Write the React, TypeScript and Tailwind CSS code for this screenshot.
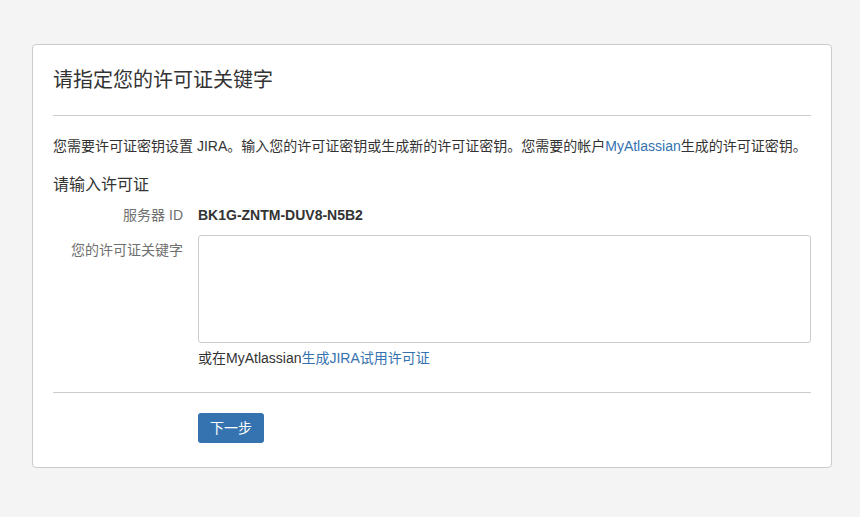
import React from "react";

export default function App() {
  const font = { fontFamily: '"Liberation Sans", Arial, "Noto Sans CJK SC", sans-serif' };
  return (
    <div className="min-h-screen w-full bg-[#f4f4f4] pt-[44px]" style={font}>
      <div className="ml-[32px] w-[800px] rounded-[4px] border border-[#cccccc] bg-white px-[20px] pb-[24px] pt-[20px] text-[14px] text-[#333333]">
        <h1 className="text-[20px] leading-[30px] text-[#333333]">请指定您的许可证关键字</h1>
        <div className="mt-[20px] h-px bg-[#cccccc]" />
        <p className="mt-[20px] leading-[20px]">
          您需要许可证密钥设置 JIRA。输入您的许可证密钥或生成新的许可证密钥。您需要的帐户
          <a className="text-[#3572b0]">MyAtlassian</a>生成的许可证密钥。
        </p>
        <h2 className="mt-[18px] text-[16px] leading-[22px]">请输入许可证</h2>
        <div className="mt-[9px] grid grid-cols-[130px_1fr] gap-x-[15px]">
          <div className="text-right leading-[20px] text-[#707070]">服务器 ID</div>
          <div className="font-bold leading-[20px]">BK1G-ZNTM-DUV8-N5B2</div>
          <div className="mt-[10px] pt-[5px] text-right leading-[20px] text-[#707070]">您的许可证关键字</div>
          <div className="mt-[10px]">
            <textarea className="block h-[108px] w-full resize-none rounded-[3px] border border-[#cccccc] px-2 py-1 outline-none" />
            <div className="mt-[5px] leading-[20px]">
              或在MyAtlassian<a className="text-[#3572b0]">生成JIRA试用许可证</a>
            </div>
          </div>
        </div>
        <div className="mt-[24px] h-px bg-[#cccccc]" />
        <div className="mt-[20px] grid grid-cols-[130px_1fr] gap-x-[15px]">
          <div />
          <div>
            <button className="h-[30px] rounded-[3px] bg-[#3572b0] px-[12px] text-[14px] text-white">下一步</button>
          </div>
        </div>
      </div>
    </div>
  );
}
